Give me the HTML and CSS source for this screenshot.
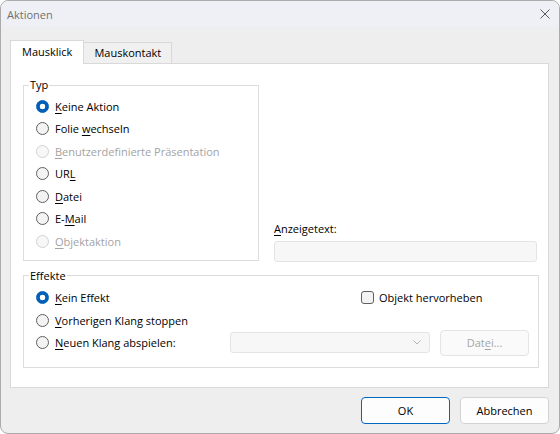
FILE: index.html
```html
<!DOCTYPE html>
<html lang="de">
<head>
<meta charset="utf-8">
<title>Aktionen</title>
<link rel="stylesheet" href="styles.css">
</head>
<body>
<div class="window">
  <div class="titlebar">
    <span class="title">Aktionen</span>
    <svg class="close" width="10" height="10" viewBox="0 0 10 10"><path d="M0.5 0.5 L9.5 9.5 M9.5 0.5 L0.5 9.5" stroke="#5a5a5a" stroke-width="1" fill="none"/></svg>
  </div>
  <div class="body">
    <div class="tabs">
      <div class="tab active">Mausklick</div>
      <div class="tab">Mauskontakt</div>
    </div>
    <div class="panel">
      <div class="top-row">
        <fieldset class="group typ">
          <legend>Typ</legend>
          <div class="rows">
            <div class="radio checked"><span class="dot"></span><span><u>K</u>eine Aktion</span></div>
            <div class="radio"><span class="dot"></span><span>Folie <u>w</u>echseln</span></div>
            <div class="radio disabled"><span class="dot"></span><span><u>B</u>enutzerdefinierte Präsentation</span></div>
            <div class="radio"><span class="dot"></span><span>UR<u>L</u></span></div>
            <div class="radio"><span class="dot"></span><span><u>D</u>atei</span></div>
            <div class="radio"><span class="dot"></span><span>E-<u>M</u>ail</span></div>
            <div class="radio disabled"><span class="dot"></span><span><u>O</u>bjektaktion</span></div>
          </div>
        </fieldset>
        <div class="display-text">
          <div class="field-label"><u>A</u>nzeigetext:</div>
          <div class="textbox"></div>
        </div>
      </div>
      <fieldset class="group effekte">
        <legend>Effekte</legend>
        <div class="rows">
          <div class="row">
            <div class="radio checked col1"><span class="dot"></span><span><u>K</u>ein Effekt</span></div>
            <div class="checkbox"><span class="box"></span><span>Objekt hervorheben</span></div>
          </div>
          <div class="row">
            <div class="radio col1"><span class="dot"></span><span><u>V</u>orherigen Klang stoppen</span></div>
          </div>
          <div class="row">
            <div class="radio col1"><span class="dot"></span><span><u>N</u>euen Klang abspielen:</span></div>
            <div class="combo">
              <svg width="8" height="5" viewBox="0 0 8 5"><path d="M0.5 0.5 L4 4 L7.5 0.5" stroke="#b4b4b4" stroke-width="1" fill="none"/></svg>
            </div>
            <div class="btn disabled-btn">Dat<u>e</u>i...</div>
          </div>
        </div>
      </fieldset>
    </div>
    <div class="buttons">
      <div class="btn default">OK</div>
      <div class="btn">Abbrechen</div>
    </div>
  </div>
</div>
</body>
</html>
```
FILE: styles.css
```css
* { box-sizing: border-box; }
html, body { margin: 0; padding: 0; background: #ffffff; }
body {
  font-family: "Open Sans", "Noto Sans", sans-serif;
  font-size: 11px;
  color: #000000;
}
u { text-decoration-thickness: 1px; text-underline-offset: 2px; }

.window {
  width: 560px;
  height: 434px;
  border: 1px solid #ababab;
  border-radius: 8px;
  overflow: hidden;
  background: #eeeeee;
  display: flex;
  flex-direction: column;
}
.titlebar {
  height: 26px;
  flex: none;
  background: #eff0f5;
  display: flex;
  align-items: center;
  justify-content: space-between;
  padding: 0 9px 0 6px;
}
.title { color: #707070; }
.close { display: block; }

.body {
  flex: 1;
  padding: 13px 10px 0 9px;
  display: flex;
  flex-direction: column;
}

.tabs {
  display: flex;
  align-items: flex-end;
  height: 23px;
}
.tab {
  height: 21px;
  padding: 0 10px;
  border: 1px solid #d9d9d9;
  border-bottom: none;
  background: #f0f0f0;
  line-height: 20px;
}
.tab.active {
  height: 24px;
  margin-bottom: -1px;
  padding: 0 11px;
  background: #ffffff;
  line-height: 22px;
  position: relative;
  z-index: 1;
}
.tab + .tab { border-left: none; }

.panel {
  height: 325px;
  flex: none;
  background: #ffffff;
  border: 1px solid #d9d9d9;
  padding: 13px 9px 0 12px;
  display: flex;
  flex-direction: column;
}

.top-row {
  display: flex;
  align-items: flex-end;
}

.group {
  margin: 0;
  min-width: 0;
  border: 1px solid #dcdcdc;
  padding: 0;
}
.group legend {
  margin-left: 5px;
  padding: 0 1px;
  line-height: 16px;
}
.group .rows { padding-left: 12px; }

.typ {
  width: 236px;
  flex: none;
  padding: 2px 0 7px 0;
}

.display-text {
  flex: 1;
  margin-left: 15px;
  margin-right: 2px;
  margin-bottom: -1px;
  display: flex;
  flex-direction: column;
}
.field-label {
  line-height: 16px;
  margin-bottom: 4px;
}
.textbox {
  height: 21px;
  border: 1px solid #e4e4e4;
  border-radius: 3px;
  background: #f7f7f7;
}

.effekte {
  width: 516px;
  margin-top: 7px;
  padding: 3px 0 13px 0;
}

.radio {
  display: flex;
  align-items: center;
  height: 22.5px;
  white-space: nowrap;
}
.dot {
  width: 13px;
  height: 13px;
  flex: none;
  border-radius: 50%;
  border: 1px solid #606060;
  background: #f3f3f3;
  margin-right: 6px;
}
.radio.checked .dot {
  border-color: #005fb8;
  background: radial-gradient(circle, #ffffff 0 2.6px, #005fb8 3.1px);
}
.radio.disabled { color: #a3a3a3; }
.radio.disabled .dot {
  border-color: #d2d2d2;
  background: #f7f7f7;
}

.row {
  display: flex;
  align-items: center;
  height: 22.5px;
}
.col1 { width: 194px; flex: none; }
.row:first-child .col1 { width: 325px; }

.checkbox {
  display: flex;
  align-items: center;
  white-space: nowrap;
}
.box {
  width: 13px;
  height: 13px;
  border: 1px solid #606060;
  border-radius: 3px;
  background: #f3f3f3;
  margin-right: 5px;
}

.combo {
  width: 200px;
  height: 21px;
  border: 1px solid #e4e4e4;
  border-radius: 3px;
  background: #f7f7f7;
  display: flex;
  align-items: center;
  justify-content: flex-end;
  padding-right: 8px;
}
.combo svg { display: block; }

.btn {
  width: 89px;
  height: 27px;
  border: 1px solid #d3d3d3;
  border-radius: 4px;
  background: #fdfdfd;
  display: flex;
  align-items: center;
  justify-content: center;
}
.disabled-btn {
  height: 26px;
  margin-left: 10px;
  border-color: #e4e4e4;
  background: #fafafa;
  color: #a5a5a5;
}
.btn.default { border-color: #0067c0; }

.buttons {
  display: flex;
  justify-content: flex-end;
  gap: 10px;
  margin-top: 9px;
}
```
